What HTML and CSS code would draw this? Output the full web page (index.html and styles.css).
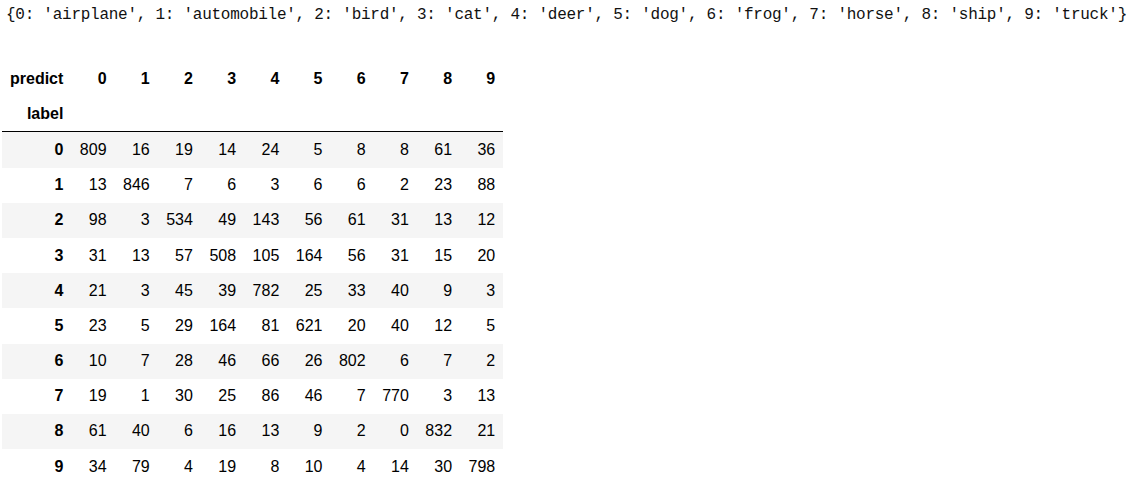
FILE: index.html
```html
<!DOCTYPE html>
<html>
<head>
<meta charset="utf-8">
<link rel="stylesheet" href="styles.css">
</head>
<body>
<div class="output">
<pre class="stream">{0: 'airplane', 1: 'automobile', 2: 'bird', 3: 'cat', 4: 'deer', 5: 'dog', 6: 'frog', 7: 'horse', 8: 'ship', 9: 'truck'}</pre>
<table class="dataframe">
<thead>
<tr><th>predict</th><th>0</th><th>1</th><th>2</th><th>3</th><th>4</th><th>5</th><th>6</th><th>7</th><th>8</th><th>9</th></tr>
<tr><th>label</th><th></th><th></th><th></th><th></th><th></th><th></th><th></th><th></th><th></th><th></th></tr>
</thead>
<tbody>
<tr><th>0</th><td>809</td><td>16</td><td>19</td><td>14</td><td>24</td><td>5</td><td>8</td><td>8</td><td>61</td><td>36</td></tr>
<tr><th>1</th><td>13</td><td>846</td><td>7</td><td>6</td><td>3</td><td>6</td><td>6</td><td>2</td><td>23</td><td>88</td></tr>
<tr><th>2</th><td>98</td><td>3</td><td>534</td><td>49</td><td>143</td><td>56</td><td>61</td><td>31</td><td>13</td><td>12</td></tr>
<tr><th>3</th><td>31</td><td>13</td><td>57</td><td>508</td><td>105</td><td>164</td><td>56</td><td>31</td><td>15</td><td>20</td></tr>
<tr><th>4</th><td>21</td><td>3</td><td>45</td><td>39</td><td>782</td><td>25</td><td>33</td><td>40</td><td>9</td><td>3</td></tr>
<tr><th>5</th><td>23</td><td>5</td><td>29</td><td>164</td><td>81</td><td>621</td><td>20</td><td>40</td><td>12</td><td>5</td></tr>
<tr><th>6</th><td>10</td><td>7</td><td>28</td><td>46</td><td>66</td><td>26</td><td>802</td><td>6</td><td>7</td><td>2</td></tr>
<tr><th>7</th><td>19</td><td>1</td><td>30</td><td>25</td><td>86</td><td>46</td><td>7</td><td>770</td><td>3</td><td>13</td></tr>
<tr><th>8</th><td>61</td><td>40</td><td>6</td><td>16</td><td>13</td><td>9</td><td>2</td><td>0</td><td>832</td><td>21</td></tr>
<tr><th>9</th><td>34</td><td>79</td><td>4</td><td>19</td><td>8</td><td>10</td><td>4</td><td>14</td><td>30</td><td>798</td></tr>
</tbody>
</table>
</div>
</body>
</html>
```

FILE: styles.css
```css
html, body {
  margin: 0;
  padding: 0;
  background: #ffffff;
}

.output {
  display: flex;
  flex-direction: column;
  align-items: flex-start;
  padding: 0 0 0 2px;
}

.stream {
  margin: 0;
  padding: 3px 0 0 4px;
  font-family: "Liberation Mono", "DejaVu Sans Mono", monospace;
  font-size: 16px;
  letter-spacing: -0.26px;
  line-height: 24px;
  color: #111;
  white-space: pre;
}

.dataframe {
  margin-top: 34px;
  border-collapse: collapse;
  border-spacing: 0;
  border: none;
  font-family: "Liberation Sans", Arial, sans-serif;
  font-size: 16px;
  color: #000;
}

.dataframe th,
.dataframe td {
  text-align: right;
  vertical-align: middle;
  padding: 0 8px;
  height: 35.2px;
  line-height: normal;
  white-space: nowrap;
  border: none;
}

.dataframe th {
  font-weight: bold;
}

.dataframe td {
  font-weight: normal;
  width: 27.2px;
}

.dataframe thead {
  border-bottom: 1px solid #000;
}

.dataframe tbody tr:nth-child(odd) {
  background: #f5f5f5;
}
```
